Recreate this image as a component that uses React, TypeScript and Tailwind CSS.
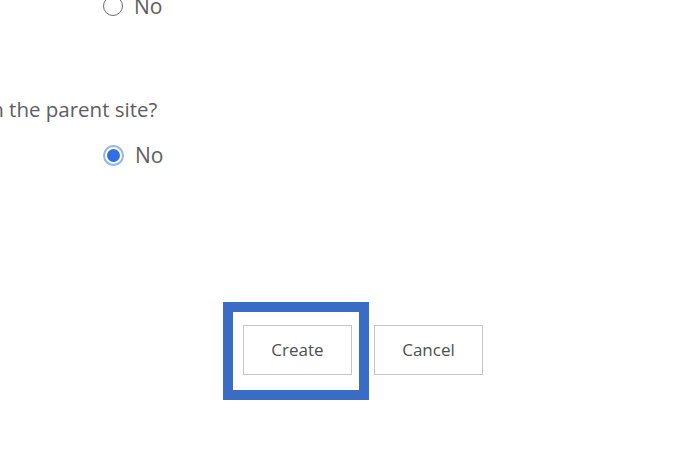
export default function App() {
  return (
    <div
      className="relative h-[458px] w-[692px] overflow-hidden bg-white text-[#5e5e5e]"
      style={{ fontFamily: '"Open Sans", "Noto Sans", sans-serif' }}
    >
      <div className="-mt-[5px] flex h-[22px] items-center gap-[11px] pl-[103px]">
        <span className="h-[20px] w-[20px] rounded-full border-[1.5px] border-[#6b6b6b]" />
        <span className="text-[21px] leading-[22px]">No</span>
      </div>

      <p className="-ml-[14px] mt-[79px] text-[20.5px] leading-[26px]">in the parent site?</p>

      <div className="mt-[22px] flex h-[22px] items-center gap-[11px] pl-[103px]">
        <span className="flex h-[21px] w-[21px] items-center justify-center rounded-full border-[2px] border-[#8fb6ee] bg-white">
          <span className="h-[13px] w-[13px] rounded-full bg-[#2f6fe2]" />
        </span>
        <span className="text-[21px] leading-[22px]">No</span>
      </div>

      <div className="mt-[136px] flex items-start pl-[223px]">
        <div className="h-[98px] w-[146px] border-[10px] border-[#3a6cc6] bg-white pl-[10px] pt-[13px]">
          <button
            type="button"
            className="h-[50px] w-[109px] border border-[#c6c6c6] bg-white text-[17px] text-[#4f4f4f]"
          >
            Create
          </button>
        </div>
        <button
          type="button"
          className="ml-[5px] mt-[23px] h-[50px] w-[109px] border border-[#c6c6c6] bg-white text-[17px] text-[#4f4f4f]"
        >
          Cancel
        </button>
      </div>
    </div>
  );
}
